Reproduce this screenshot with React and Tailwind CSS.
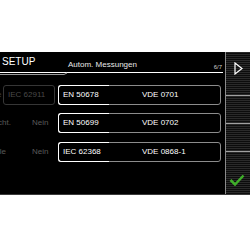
export default function App() {
  const rows = [
    { left: "iec", norm: "EN 50678", vde: "VDE 0701" },
    { left: "cht.", norm: "EN 50699", vde: "VDE 0702" },
    { left: "lle", norm: "IEC 62368", vde: "VDE 0868-1" },
  ];

  return (
    <div className="w-[250px] h-[250px] bg-white pt-[52px] font-['Liberation_Sans',Arial,sans-serif]">
      <div className="h-[143px] bg-black border-b border-[#3a3a3a] flex">
        {/* main area */}
        <div className="w-[225px] flex flex-col overflow-hidden">
          {/* header */}
          <div className="h-[19px] flex items-start text-white">
            <span className="w-[66px] ml-[2px] mt-[4.5px] text-[10px] leading-none">SETUP</span>
            <span className="mt-[9px] text-[8px] leading-none text-[#e8e8e8]">Autom. Messungen</span>
            <span className="ml-auto mr-[3px] mt-[12px] text-[6px] leading-none text-[#cfcfcf]">6/7</span>
          </div>
          <svg width="225" height="5" className="block">
            <path d="M0 1.5 H63 L66 1.5 H223" stroke="#ffffff" strokeWidth="1" fill="none" />
            <path d="M0 3.5 H64 L67 2" stroke="#9a9a9a" strokeWidth="1" fill="none" />
          </svg>

          {/* rows */}
          <div className="mt-[9px] flex flex-col gap-[8px]">
            {rows.map((r, i) => (
              <div key={r.norm} className={"h-[20px] flex items-center" + (i === 2 ? " mt-[1px]" : "")}>
                <div className="w-[58px] shrink-0 flex items-center h-full text-[8px] leading-none">
                  {i === 0 ? (
                    <>
                      <span className="-ml-[3px] w-[6px] text-[#444]">e</span>
                      <div className="w-[52px] h-[20px] border border-[#363636] rounded-[3px] flex items-center pl-[4px] text-[#4a4a4a]">
                        IEC 62911
                      </div>
                    </>
                  ) : (
                    <>
                      <span className="-ml-[2px] w-[34px] text-[#5a5a5a]">{r.left}</span>
                      <span className="text-[#5a5a5a]">Nein</span>
                    </>
                  )}
                </div>
                <div className="relative w-[163px] h-[20px] shrink-0 rounded-[3px] border border-[#8c8c8c] flex items-center pl-[4px] text-[8px] leading-none text-white">
                  <div className="absolute -left-px -top-px -bottom-px w-[51px] border-l-[1.5px] border-t-[1.5px] border-b-[1.5px] border-white rounded-l-[3px]" />
                  <span className="w-[79px]">{r.norm}</span>
                  <span>{r.vde}</span>
                </div>
              </div>
            ))}
          </div>
        </div>

        {/* sidebar */}
        <div className="w-[25px] border-l border-[#8a8a8a] flex flex-col bg-[repeating-linear-gradient(to_bottom,#2a2a2a_0px,#2a2a2a_1px,#0c0c0c_1px,#0c0c0c_2px)]">
          <div className="h-[44px] border-b border-[#a0a0a0]">
            <svg width="9" height="13" className="ml-[7.5px] mt-[9.5px] block">
              <polygon points="1,1 8,6.5 1,12" fill="none" stroke="#ffffff" strokeWidth="1.2" />
            </svg>
          </div>
          <div className="h-[28px] border-b border-[#a0a0a0]" />
          <div className="h-[28px] border-b border-[#a0a0a0]" />
          <div className="flex-1">
            <svg width="16" height="12" className="ml-[3px] mt-[22px] block">
              <path d="M1.5 6 L6 10.5 L14.5 1.5" fill="none" stroke="#3fae2a" strokeWidth="2.5" />
            </svg>
          </div>
        </div>
      </div>
    </div>
  );
}
